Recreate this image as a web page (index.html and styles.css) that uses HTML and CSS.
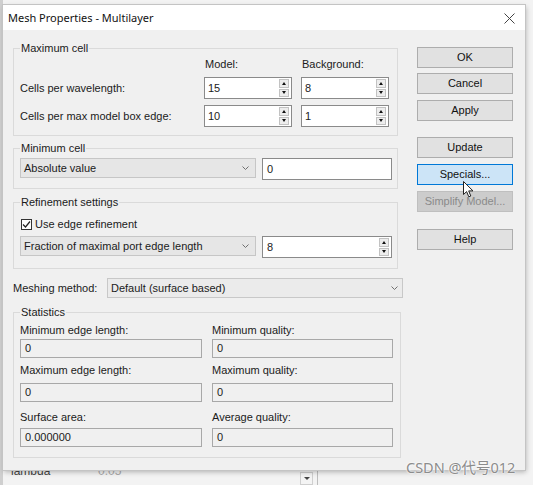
FILE: index.html
```html
<!DOCTYPE html>
<html>
<head>
<meta charset="utf-8">
<link rel="stylesheet" href="styles.css">
</head>
<body>
<div class="screen">
  <div class="dialog">
    <div class="titlebar">
      <span class="title">Mesh Properties - Multilayer</span>
      <svg class="close" width="11" height="11" viewBox="0 0 11 11"><path d="M0.5 0.5L10.5 10.5M10.5 0.5L0.5 10.5" stroke="#444" stroke-width="1"/></svg>
    </div>
    <div class="content">
      <div class="left">
        <div class="group g-max">
          <div class="legend">Maximum cell</div>
          <div class="max-grid">
            <span></span><span class="colhead">Model:</span><span class="colhead">Background:</span>
            <span class="rowlbl">Cells per wavelength:</span>
            <div class="spin"><span class="val">15</span><span class="spinbtns"><i class="up"></i><i class="dn"></i></span></div>
            <div class="spin"><span class="val">8</span><span class="spinbtns"><i class="up"></i><i class="dn"></i></span></div>
            <span class="rowlbl">Cells per max model box edge:</span>
            <div class="spin"><span class="val">10</span><span class="spinbtns"><i class="up"></i><i class="dn"></i></span></div>
            <div class="spin"><span class="val">1</span><span class="spinbtns"><i class="up"></i><i class="dn"></i></span></div>
          </div>
        </div>

        <div class="group g-min">
          <div class="legend">Minimum cell</div>
          <div class="combo-row">
            <div class="combo"><span>Absolute value</span><svg class="chev" width="7" height="4" viewBox="0 0 7 4"><path d="M0.5 0.5L3.5 3.5L6.5 0.5" fill="none" stroke="#707070"/></svg></div>
            <div class="edit"><span class="val">0</span></div>
          </div>
        </div>

        <div class="group g-ref">
          <div class="legend">Refinement settings</div>
          <div class="check-row">
            <span class="checkbox"><svg width="9" height="9" viewBox="0 0 9 9"><path d="M1 4.5L3.5 7L8 1.5" fill="none" stroke="#222" stroke-width="1.2"/></svg></span>
            <span>Use edge refinement</span>
          </div>
          <div class="combo-row r2">
            <div class="combo"><span>Fraction of maximal port edge length</span><svg class="chev" width="7" height="4" viewBox="0 0 7 4"><path d="M0.5 0.5L3.5 3.5L6.5 0.5" fill="none" stroke="#707070"/></svg></div>
            <div class="spin wide"><span class="val">8</span><span class="spinbtns"><i class="up"></i><i class="dn"></i></span></div>
          </div>
        </div>

        <div class="mesh-row">
          <span class="mesh-lbl">Meshing method:</span>
          <div class="combo mesh"><span>Default (surface based)</span><svg class="chev" width="7" height="4" viewBox="0 0 7 4"><path d="M0.5 0.5L3.5 3.5L6.5 0.5" fill="none" stroke="#707070"/></svg></div>
        </div>

        <div class="group g-stat">
          <div class="legend">Statistics</div>
          <div class="srow lbl l1"><span>Minimum edge length:</span><span>Minimum quality:</span></div>
          <div class="srow fld f1"><span class="sfield">0</span><span class="sfield">0</span></div>
          <div class="srow lbl l2"><span>Maximum edge length:</span><span>Maximum quality:</span></div>
          <div class="srow fld f2"><span class="sfield">0</span><span class="sfield">0</span></div>
          <div class="srow lbl l3"><span>Surface area:</span><span>Average quality:</span></div>
          <div class="srow fld f3"><span class="sfield">0.000000</span><span class="sfield">0</span></div>
        </div>
      </div>

      <div class="buttons">
        <div class="btn b-ok">OK</div>
        <div class="btn b-cancel">Cancel</div>
        <div class="btn b-apply">Apply</div>
        <div class="btn b-update">Update</div>
        <div class="btn b-spec hot">Specials...</div>
        <div class="btn b-simp disabled">Simplify Model...</div>
        <div class="btn b-help">Help</div>
      </div>
    </div>
  </div>
  <div class="under">
    <span class="u1">lambda</span><span class="u2">0.05</span>
    <span class="u-drop"><i></i></span><span class="u-line"></span>
  </div>
</div>
<svg class="cursor" width="12" height="18" viewBox="0 0 12 18"><path d="M0.5 0.5L0.5 13.5L3.6 10.6L5.8 15.8L7.8 15L5.7 9.9L10 9.9Z" fill="#fff" stroke="#222" stroke-width="1" stroke-linejoin="round"/></svg>
<div class="watermark">CSDN @代号012</div>
</body>
</html>
```

FILE: styles.css
```css
html, body {
  margin: 0;
  padding: 0;
}
body {
  width: 533px;
  height: 485px;
  overflow: hidden;
  background: #f3f3f3;
  font-family: "Liberation Sans", Arial, sans-serif;
  font-size: 11px;
  color: #1b1b1b;
  position: relative;
}
.screen {
  padding: 5px 0 0 3px;
  background: linear-gradient(to right, #cfcfcf 0, #cfcfcf 3px, transparent 3px);
}
.dialog {
  width: 522px;
  height: 465px;
  background: #f0f0f0;
  box-shadow: 0 0 0 1px #c4c4c4, 1px 2px 5px rgba(0,0,0,0.28);
  display: flex;
  flex-direction: column;
  position: relative;
  z-index: 1;
}
.titlebar {
  height: 25px;
  background: #ffffff;
  display: flex;
  align-items: center;
  justify-content: space-between;
  padding: 0 10px 0 5px;
}
.title {
  font-family: "Noto Sans", "Liberation Sans", sans-serif;
  font-size: 11px;
  color: #111;
}
.close {
  margin-top: 2px;
}
.content {
  display: flex;
  padding-left: 10px;
}
.left {
  width: 391px;
  display: flex;
  flex-direction: column;
}
.group {
  width: 385px;
  box-sizing: border-box;
  border: 1px solid #dadada;
  padding: 0 5px 0 6px;
  display: flex;
  flex-direction: column;
}
.legend {
  margin-top: -8px;
  margin-left: 0;
  line-height: 14px;
  height: 14px;
  background: #f0f0f0;
  padding: 0 1px;
  align-self: flex-start;
}
.g-max {
  margin-top: 18px;
  padding-bottom: 8px;
}
.max-grid {
  display: grid;
  grid-template-columns: 1fr 88px 88px;
  column-gap: 9px;
  row-gap: 6px;
  padding-right: 3px;
  align-items: center;
}
.colhead {
  line-height: 14px;
  margin-top: 2px;
  padding-left: 1px;
}
.rowlbl {
  line-height: 14px;
}
.spin {
  height: 22px;
  box-sizing: border-box;
  border: 1px solid #8a8a8a;
  background: #fff;
  display: flex;
  align-items: stretch;
}
.spin .val, .edit .val {
  flex: 1;
  padding-left: 3px;
  line-height: 20px;
}
.spinbtns {
  width: 10px;
  display: flex;
  flex-direction: column;
  gap: 1px;
  padding: 1px 2px 1px 0;
}
.spinbtns i {
  flex: 1;
  border: 1px solid #c2c2c2;
  background: #ededed;
  display: flex;
  align-items: center;
  justify-content: center;
}
.spinbtns i::after {
  content: "";
  border-left: 2.5px solid transparent;
  border-right: 2.5px solid transparent;
}
.spinbtns i.up::after {
  border-bottom: 3px solid #111;
}
.spinbtns i.dn::after {
  border-top: 3px solid #111;
}
.g-min {
  margin-top: 12px;
  padding-bottom: 8px;
}
.combo-row {
  display: flex;
  align-items: flex-start;
  gap: 6px;
  margin-top: 3px;
}
.combo {
  width: 236px;
  height: 20px;
  box-sizing: border-box;
  border: 1px solid #c6c6c6;
  background: #e6e6e6;
  display: flex;
  align-items: center;
  justify-content: space-between;
  padding: 0 6px 0 3px;
}
.edit {
  width: 130px;
  height: 22px;
  box-sizing: border-box;
  border: 1px solid #8a8a8a;
  background: #fff;
  display: flex;
}
.edit .val {
  padding-left: 4px;
}
.spin.wide {
  width: 130px;
}
.spin.wide .val {
  padding-left: 4px;
}
.g-ref {
  margin-top: 13px;
  padding-bottom: 10px;
}
.check-row {
  display: flex;
  align-items: center;
  gap: 3px;
  margin-top: 8px;
  line-height: 14px;
  padding-left: 1px;
}
.checkbox {
  width: 11px;
  height: 11px;
  box-sizing: border-box;
  border: 1px solid #333;
  background: #fff;
  display: flex;
  align-items: center;
  justify-content: center;
}
.combo-row.r2 {
  margin-top: 5px;
}
.mesh-row {
  display: flex;
  align-items: center;
  margin-top: 9px;
  margin-right: 1px;
}
.mesh-lbl {
  width: 94px;
}
.combo.mesh {
  flex: 1;
  width: auto;
  background: #ebebeb;
  border-color: #c8c8c8;
  padding-right: 4px;
}
.g-stat {
  width: 388px;
  margin-top: 14px;
  padding-bottom: 10px;
}
.srow {
  display: flex;
  gap: 10px;
}
.srow.lbl {
  line-height: 14px;
}
.srow.lbl span {
  width: 182px;
}
.sfield {
  width: 182px;
  height: 19px;
  box-sizing: border-box;
  border: 1px solid #a8a8a8;
  background: #f0f0f0;
  line-height: 17px;
  padding-left: 4px;
}
.srow .sfield + .sfield {
  width: 181px;
}
.l1 { margin-top: 4px; }
.f1 { margin-top: 2px; }
.l2 { margin-top: 5px; }
.f2 { margin-top: 6px; }
.l3 { margin-top: 8px; }
.f3 { margin-top: 4px; }

.buttons {
  width: 96px;
  margin-left: 13px;
  padding-top: 17px;
  display: flex;
  flex-direction: column;
}
.btn {
  height: 21px;
  box-sizing: border-box;
  border: 1px solid #adadad;
  background: #e1e1e1;
  text-align: center;
  line-height: 19px;
  color: #111;
}
.b-cancel { margin-top: 5px; }
.b-apply { margin-top: 6px; }
.b-update { margin-top: 16px; }
.b-spec { margin-top: 6px; }
.b-simp { margin-top: 6px; }
.b-help { margin-top: 17px; }
.btn.hot {
  background: #cce4f7;
  border-color: #0078d7;
}
.btn.disabled {
  background: #cccccc;
  border-color: #bfbfbf;
  color: #8a8a8a;
}
.under {
  height: 20px;
  display: flex;
  align-items: flex-start;
  padding-left: 8px;
  font-size: 12px;
  line-height: 12px;
  margin-top: -5px;
}
.u1 {
  color: #444;
  width: 87px;
}
.u2 {
  color: #aaa;
  width: 202px;
}
.u-drop {
  width: 13px;
  height: 13px;
  margin-top: 7px;
  box-sizing: border-box;
  border: 1px solid #cfcfcf;
  background: #f4f4f4;
  display: flex;
  align-items: center;
  justify-content: center;
}
.u-drop i {
  border-left: 3px solid transparent;
  border-right: 3px solid transparent;
  border-top: 3px solid #444;
}
.u-line {
  width: 1px;
  height: 20px;
  margin-left: 4px;
  background: #bdbdbd;
}
.cursor {
  position: absolute;
  left: 463px;
  top: 181px;
  z-index: 3;
}
.watermark {
  position: absolute;
  left: 406px;
  top: 458px;
  z-index: 3;
  font-family: "Noto Sans", "Noto Sans CJK SC", sans-serif;
  font-size: 14.5px;
  line-height: 18px;
  color: #8c8c8c;
  text-shadow: 0 0 2px #fff, 0 0 2px #fff;
}
```
